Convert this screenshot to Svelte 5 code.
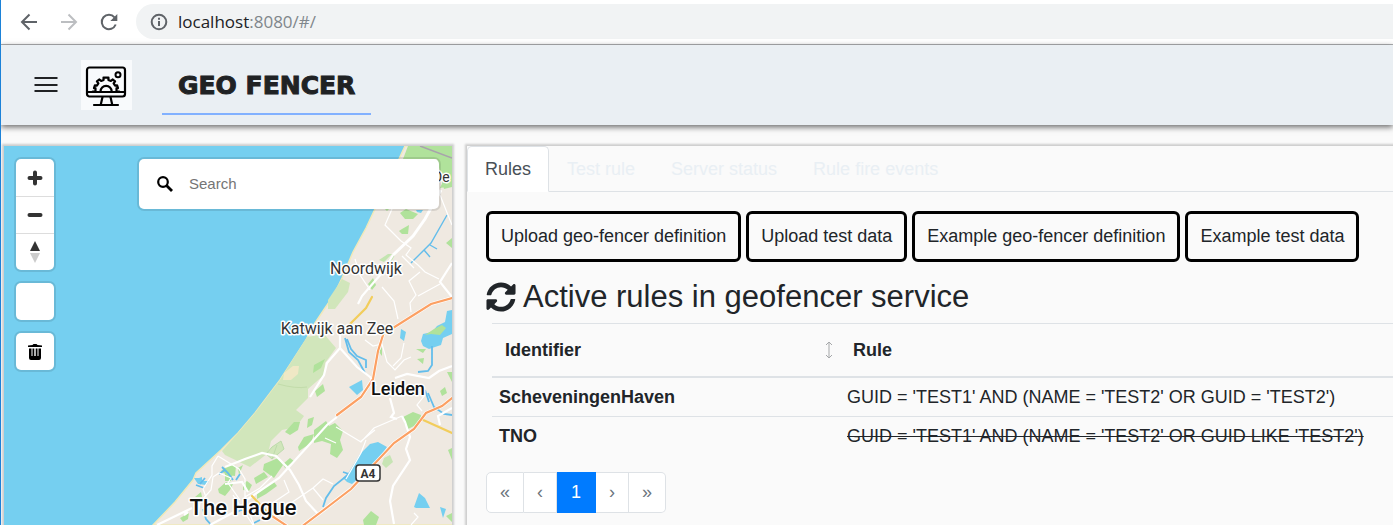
<script>
  const tabs = ['Rules', 'Test rule', 'Server status', 'Rule fire events'];
  const actions = [
    'Upload geo-fencer definition',
    'Upload test data',
    'Example geo-fencer definition',
    'Example test data'
  ];
  const rules = [
    { id: 'ScheveningenHaven', rule: "GUID = 'TEST1' AND (NAME = 'TEST2' OR GUID = 'TEST2')", active: true },
    { id: 'TNO', rule: "GUID = 'TEST1' AND (NAME = 'TEST2' OR GUID LIKE 'TEST2')", active: false }
  ];
  let current = $state(0);
  let search = $state('');
</script>

<div class="window">
  <div class="browser">
    <button class="nav" aria-label="Back">
      <svg width="18" height="18" viewBox="0 0 18 18" fill="none" stroke="#5f6368" stroke-width="2"><path d="M17 9H2M9.500 1.500L2 9l7.500 7.500" /></svg>
    </button>
    <button class="nav" aria-label="Forward">
      <svg width="18" height="18" viewBox="0 0 18 18" fill="none" stroke="#bcbec1" stroke-width="2"><path d="M1 9h15M8.500 1.500L16 9l-7.500 7.500" /></svg>
    </button>
    <button class="nav" aria-label="Reload">
      <svg width="18" height="18" viewBox="0 0 18 18" fill="none" stroke="#5f6368" stroke-width="2"><path d="M15.700 11.500A7.200 7.200 0 1 1 14.500 4.300" /><path d="M17.300 1v7h-7z" fill="#5f6368" stroke="none" /></svg>
    </button>
    <div class="address">
      <svg width="18" height="18" viewBox="0 0 18 18" fill="none" stroke="#5f6368" stroke-width="2"><circle cx="9" cy="9" r="7.300" /><path d="M9 8v5M9 4.800v2" /></svg>
      <span class="url" role="textbox" tabindex="0" aria-label="Address"><b>localhost</b>:8080/#/</span>
    </div>
  </div>

  <header>
    <button class="menu" aria-label="Menu">
      <svg width="24" height="18" viewBox="0 0 24 18" stroke="#202224" stroke-width="2"><path d="M0.500 2h23M0.500 9h23M0.500 15h23" /></svg>
    </button>
    <div class="logo">
      <svg width="51" height="50" viewBox="0 0 51 50" fill="none" stroke="#000" stroke-width="2.200" stroke-linejoin="round" stroke-linecap="round">
        <rect x="6" y="7.500" width="38" height="29" rx="2.500" />
        <path d="M6 32h38M21.500 37l-1.700 7.500M29.500 37l1.700 7.500M13 45h24" />
        <circle cx="37" cy="14.800" r="2.500" stroke-width="2" />
        <path d="M19.500 31.500a5.600 5.600 0 0 1 11.200 0" />
        <path d="M11.800 31.500h2.700v-3.300h-1.500l.9-2.900 2 .3 1.500-2.200-1.500-2 2.300-1.900 1.900 1.400 2.500-1-.1-2.200h5l-.1 2.200 2.500 1 1.900-1.400 2.300 1.900-1.500 2 1.500 2.200 2-.3.9 2.900h-1.500v3.300h2.700" stroke-width="2.200" />
      </svg>
    </div>
    <a class="brand" href="#/">GEO FENCER</a>
  </header>

  <main>
    <section class="map" aria-label="Map">
      <svg class="tiles" viewBox="4 146 448 379" preserveAspectRatio="xMinYMin slice">
        <rect x="4" y="146" width="2000" height="2000" fill="#75cff0" />
        <path d="M405 146L399 159 375 209 366 228 353 252 342 278 334 295 325 308 315 323 306 340 280 380 255 413 238 433 221 450 196 473 193 480 175 502 153 525H453V146z" fill="#efe9e1" stroke="#f1e9b9" stroke-width="1.500" />
        <!-- dunes and woods -->
        <path d="M307 337L324 334 336 348 325 363 324 375 308 389 308 398 296 410 304 416 296 427 282 430 271 441 268 453 250 467 225 455 222 451 238 433 255 413 280 380z" fill="#d1e6bb" />
        <path d="M342 279l8 4-2 9-13 17-7 0 0-9z" fill="#d1e6bb" />
        <path d="M293 366l6 0-1 8-7 6-8 0 1-7z" fill="#f0e8c5" />
        <path d="M278 384q18 5 29 3" fill="none" stroke="#c2dcaa" />
        <g fill="#b0e29b">
          <path d="M408 146h44v41l-8 2-7-30h-34z" />
          <path d="M400 213l6-4 12 5-5 5-8 0zM402 229l7-4-1 9-6 0-3-3zM368 284l5-6 3 7-4 5zM384 208l5 1-2 2zM446 243l6-5v10zM440 188l4-9 2 8z" />
          <path d="M379 260l9-6 4 0-8 8-5-2zM389 259l6-4-4 7-4 2z" opacity=".7" />
          <path d="M315 391l8-7 2 7-8 6zM314 365l11-6-4 9-8 5z" />
          <path d="M308 419l6-2-2 8-5 3zM285 432l9-10 6 0-2 8-8 5zM298 447l6-10 10-3-3 9-12 8zM314 430l12-9 3 5 6-3 8 8-3 9 3 10-6 8-7-4 1-10-9-3-8 2z" />
          <path d="M403 417l10-5 8 3-1 8-12 6-3-4zM440 391l5-4 2 6-5 3zM447 372h5v10zM416 349l10 0-3 4zM417 359l7-1-1 6zM379 352l3-5 0 9z" />
          <path d="M264 464l14-6 5 7-9 13-11-8zM283 464l7-6 4 3-9 7zM254 478l10-6 4 5-12 7zM257 493l17-11 3 4-11 8-9 5zM243 484l4-3 5 4-3 6-6-1zM218 489l8-7 8 0-4 8-5 6-6-3zM221 471l7-6 8 1-1 10-8-1zM238 468l5-3-4 10zM195 497l6-5 1 5zM180 518l9-5-1 6-5 3zM225 472l9-8-3 17-6 0z" />
          <path d="M363 520l8-9 8 6-3 8h-12zM446 516l6-3v9zM448 450l4-2v12z" />
          <path d="M384 458l6-3 3 7-7 6-4-4z" opacity=".65" />
        </g>
        <path d="M272 447l9-6 3 8-12 10-6-5zM277 445l-5 14" fill="#d1e6bb" stroke="#bddbab" stroke-width="1" />
        <!-- water -->
        <g fill="#75cff0">
          <path d="M416 210l7 0-2 3-4-1zM349 387l13-7 1 10-6 5zM401 329l5 3-2 9-4-3z" />
          <path d="M421 341l2-7 9-2 5-6 8-4 2-11 5-1v24l-9 4-2 7-12 4-6-3z" />
          <path d="M343 478l6-6 11-18 10-10 8-2 9 5-7 10-20 20-8 7-5-2zM414 507l5-14 6 5 5 10-14 0zM440 507l6 2-3 9zM194 478l5 0 3-1 0 4 7 0-3 4-8-1z" />
        </g>
        <path d="M425 335l9-6 8-4 4 3-6 7-9-1z" fill="#b0e29b" />
        <g fill="none" stroke="#63bdeb" stroke-width="1.800">
          <path d="M447 215l-16 28-20 20M424 250l6 7M430 245l7 4" stroke-width="1.400" />
          <path d="M432 346v19l-4 6-10 1M347 339l4 10 6 7 9 4 0 8M345 338l4 14 9 8 7 13" />
          <path d="M349 474l-15 12-8 12-3 9M343 472l6 2M428 393l6 14 10 7 8 1M425 390l4 12M222 467l6 6 5 7M236 480l4-6M196 485l8 3M200 484l5-6M203 509l3 10 7 8M233 514l8-4 9-1M260 520l-6 3M225 470l-6 4" />
        </g>
        <path d="M420 146l32 12" fill="none" stroke="#a8a3ac" stroke-width="1.500" />
        <!-- minor roads -->
        <g fill="none" stroke="#fff" stroke-width="1.200">
          <path d="M392 209l-7 16 16 16 10 7-5 7 12 10 7 7 14 7M402 256l12 12M420 272l-11 9 7 14-6 8 1 9M440 284l-22 12M355 259l5 16 10 15M382 287l12 14 4 18M440 195l12 30M365 340l8 6 9-2 5 18 8 8 9-10 7-3M404 343l-3 15-8 8M366 440l-5 13-15 26M402 416l-28 12-13 14-25-15M325 438l11 5M360 442l15-12M425 395l-8 10 5 6M245 497l15-9 12-12M291 503l22-15 10-9 10 5M313 488l10 12M240 500l-12-17 3-5-12-5-6 4-2 13-11 12-2 14M233 495l20 30M411 525l7-8-4-4M284 480l5 12-18 12M218 456l-6 10 0 9-9 14 3 8M218 456l21 13 6 10 0 22 9 24" />
        </g>
        <g fill="none" stroke="#fff" stroke-width="2.200">
          <path d="M393 255l-12 19-19 22-4 8M452 263l-12 19 12 15M340 330v18l17 19 13 10 6 9M340 348l-13 15-3 12-14 22M390 398l4 15-3 4 6 2M402 416l3 6 5 15-4 12 4 11-17 26-3 15 4 23M395 378l12-4 22 4 10-7 13-5M452 408l-14 8 2 9M225 467l20-8 17-6 14 3 14 14 9 15 7 16 13 14M157 525l35-17M210 525l26-14M245 501l34-23 48-53 10-8M225 484l17-2 6 10M184 515l4-3" />
        </g>
        <path d="M441 190L425 219 413 236 393 255" fill="none" stroke="#fff" stroke-width="3" />
        <g fill="none" stroke-linecap="round">
          <path d="M372 297l-6 11-18 18M252 496l16 17M421 419l31 14" stroke="#f2cd5b" stroke-width="2.200" />
          <path d="M452 298l-21 6-38 24-9 4-6 19-5 28-12 18-24 18M452 398l-10 8-16 7-12 16-20 14-43 46-26 20-20 15-16 13M269 514l18 12" stroke="#fff" stroke-width="3.500" />
          <path d="M452 298l-21 6-38 24-9 4-6 19-5 28-12 18-24 18M452 398l-10 8-16 7-12 16-20 14-43 46-26 20-20 15-16 13M269 514l18 12" stroke="#fca063" stroke-width="2.200" />
        </g>
        <rect x="356" y="465" width="24" height="16" rx="3" fill="#fff" stroke="#333" stroke-width="1.500" />
        <g class="places">
          <text class="shield" x="368" y="478" text-anchor="middle">A4</text>
          <text x="366" y="274" text-anchor="middle">Noordwijk</text>
          <text x="337" y="334" text-anchor="middle">Katwijk aan Zee</text>
          <text x="433" y="182" class="small">De</text>
          <text class="town" x="398" y="395" text-anchor="middle">Leiden</text>
          <text class="city" x="243" y="515" text-anchor="middle">The Hague</text>
        </g>
      </svg>
      <div class="overlay">
        <div class="controls">
          <div class="group">
            <button aria-label="Zoom in"><svg width="16" height="16" viewBox="0 0 16 16" stroke="#333" stroke-width="4" stroke-linecap="round"><path d="M2.500 8h11M8 2.500v11" /></svg></button>
            <button aria-label="Zoom out"><svg width="16" height="16" viewBox="0 0 16 16" stroke="#333" stroke-width="4" stroke-linecap="round"><path d="M2.500 8h11" /></svg></button>
            <button aria-label="Reset bearing"><svg width="10" height="24" viewBox="0 0 10 24"><path d="M0 11L5 1l5 10z" fill="#333" /><path d="M0 13l5 10 5-10z" fill="#ccc" /></svg></button>
          </div>
          <div class="group"><button aria-label="Draw area"></button></div>
          <div class="group">
            <button aria-label="Delete"><svg width="16" height="18" viewBox="0 0 16 18"><path d="M1 4V2.500L5.500 2 6.500 1h3l1 1 4.500.5V4zM2 5.500h2.500V13h1V5.500h1.800V13h1.400V5.500h1.800V13h1V5.500H14V15q0 2-2 2H4q-2 0-2-2z" /></svg></button>
          </div>
        </div>
        <label class="search">
          <svg width="16" height="16" viewBox="0 0 16 16" fill="none" stroke="#000" stroke-width="2.200"><circle cx="6" cy="6" r="4.800" /><path d="M9.500 9.500L15 15" stroke-width="2.800" /></svg>
          <input type="text" placeholder="Search" aria-label="Search" bind:value={search} />
        </label>
      </div>
    </section>

    <section class="panel">
      <div class="tabs" role="tablist">
        {#each tabs as tab, i}
          <button role="tab" aria-selected={current === i} class:active={current === i} onclick={() => (current = i)}>{tab}</button>
        {/each}
      </div>
      <div class="content">
        <div class="actions">
          {#each actions as action}<button>{action}</button>{/each}
        </div>
        <h3>
          <svg width="30" height="30" viewBox="0 0 512 512" fill="#212529"><path d="M370.720 133.280C339.458 104.008 298.888 87.962 255.848 88c-77.458.068-144.328 53.178-162.791 126.850-1.344 5.363-6.122 9.150-11.651 9.150H24.103c-7.498 0-13.194-6.807-11.807-14.176C33.933 94.924 134.813 8 256 8c66.448 0 126.791 26.136 171.315 68.685L463.030 40.970C478.149 25.851 504 36.559 504 57.941V192c0 13.255-10.745 24-24 24H345.941c-21.382 0-32.090-25.851-16.971-40.971l41.750-41.749zM32 296h134.059c21.382 0 32.090 25.851 16.971 40.971l-41.750 41.750c31.262 29.273 71.835 45.319 114.876 45.280 77.418-.070 144.315-53.144 162.787-126.849 1.344-5.363 6.122-9.150 11.651-9.150h57.304c7.498 0 13.194 6.807 11.807 14.176C478.067 417.076 377.187 504 256 504c-66.448 0-126.791-26.136-171.315-68.685L48.970 471.030C33.851 486.149 8 475.441 8 454.059V320c0-13.255 10.745-24 24-24z" /></svg>
          Active rules in geofencer service
        </h3>
        <table>
          <thead>
            <tr>
              <th class="id"><div>Identifier <svg width="8" height="18" viewBox="0 0 8 18" fill="none" stroke="#a5a7a9"><path d="M4 1v16M1 4l3-3 3 3M1 14l3 3 3-3" /></svg></div></th>
              <th>Rule</th>
            </tr>
          </thead>
          <tbody>
            {#each rules as r}
              <tr>
                <th scope="row">{r.id}</th>
                <td>{#if r.active}{r.rule}{:else}<s>{r.rule}</s>{/if}</td>
              </tr>
            {/each}
          </tbody>
        </table>
        <nav aria-label="Pages">
          <button aria-label="First page">«</button>
          <button aria-label="Previous page">‹</button>
          <button class="on">1</button>
          <button aria-label="Next page">›</button>
          <button aria-label="Last page">»</button>
        </nav>
      </div>
    </section>
  </main>
</div>

<style>
  :global(body) { margin: 0; background: #fafafa; }
  .window {
    box-sizing: border-box;
    min-height: 100vh;
    display: flex;
    flex-direction: column;
    border-left: 1px solid #1c82d8;
    overflow: hidden;
    color: #212529;
    font: 18px/26px "Liberation Sans", Arial, sans-serif;
  }
  button { font: inherit; color: inherit; margin: 0; padding: 0; border: 0; background: none; cursor: pointer; }
  svg { display: block; flex: none; }

  .browser {
    display: flex;
    align-items: center;
    gap: 22px;
    padding: 4px 0 5px 19px;
    background: #fff;
    border-bottom: 1px solid #b0b2b4;
  }
  .address {
    flex: 1;
    display: flex;
    align-items: center;
    gap: 10px;
    height: 35px;
    margin-left: -4px;
    padding-left: 14px;
    border-radius: 18px 0 0 18px;
    background: #f1f3f4;
  }
  .url { font: 17px/26px "Open Sans", "Noto Sans", sans-serif; color: #80868b; }
  .url b { font-weight: 400; color: #202124; }

  header {
    position: relative;
    display: flex;
    align-items: center;
    height: 80px;
    padding-left: 33px;
    background: #eaeff3;
    box-shadow: 0 2px 6px rgba(0, 0, 0, .6);
  }
  .logo { margin-left: 23px; background: #f8fafc; }
  .brand {
    align-self: flex-start;
    margin: 14px 0 0 30px;
    padding: 0 16px;
    border-bottom: 2px solid #82b1ff;
    color: #202224;
    font: 700 25px/54px "DejaVu Sans", sans-serif;
    -webkit-text-stroke: 1px #202224;
    text-decoration: none;
  }

  main {
    flex: 1;
    display: grid;
    grid-template-columns: 448fr 926fr;
    gap: 15px;
    padding: 21px 0 0 3px;
  }
  .map, .panel { box-shadow: 0 0 2px 2px rgba(0, 0, 0, .18); min-width: 0; }
  .map { position: relative; }
  .tiles { position: absolute; width: 100%; height: 100%; }
  .places {
    font: 16px Roboto, sans-serif;
    fill: #333;
    stroke: #fff;
    stroke-width: 3px;
    stroke-linejoin: round;
    paint-order: stroke;
  }
  .town { font-size: 18px; font-weight: 500; fill: #111; }
  .city { font-size: 22px; font-weight: 500; fill: #111; }
  .small { font-size: 14px; }
  .shield { font-size: 12px; font-weight: 700; }
  .overlay {
    position: relative;
    display: flex;
    justify-content: space-between;
    align-items: flex-start;
    padding: 13px 13px 0 12px;
  }
  .controls { display: grid; gap: 13px; }
  .group, .search { background: #fff; border-radius: 5px; box-shadow: 0 0 0 2px rgba(0, 0, 0, .1); }
  .group button { display: grid; place-items: center; width: 38px; height: 37px; }
  .group button + button { border-top: 1px solid #ddd; }
  .search { display: flex; align-items: center; gap: 16px; width: 282px; height: 50px; padding-left: 18px; }
  .search input {
    flex: 1;
    min-width: 0;
    padding: 0;
    border: 0;
    outline: 0;
    background: none;
    font: 15px/20px "Liberation Sans", Arial, sans-serif;
  }
  .search input::placeholder { color: #757575; opacity: 1; }

  .tabs { display: flex; border-bottom: 1px solid #dee2e6; }
  .tabs button {
    margin-bottom: -1px;
    padding: 9px 17px;
    border: 1px solid transparent;
    border-radius: 5px 5px 0 0;
    color: #e9eff4;
  }
  .tabs .active { color: #495057; background: #fff; border-color: #dee2e6 #dee2e6 #fff; }
  .content { padding: 19px 0 0 19px; }
  .actions { display: flex; gap: 5px; }
  .actions button { padding: 9px 12px; border: 3px solid #000; border-radius: 6px; line-height: 27px; white-space: nowrap; }
  h3 { display: flex; gap: 7px; align-items: center; margin: 16px 0 7px; font-size: 31px; font-weight: 400; line-height: 38px; }
  table { width: calc(100% - 6px); margin-left: 6px; border-collapse: collapse; text-align: left; }
  thead th { padding: 13px; border-top: 1px solid #dee2e6; border-bottom: 2px solid #dee2e6; }
  thead div { display: flex; justify-content: space-between; }
  thead svg { margin: 4px -6px 0 0; }
  .id { width: 322px; }
  tbody th, tbody td { padding: 6px 7px; border-top: 1px solid #dee2e6; }
  tbody tr:first-child > * { border-top: 0; }
  nav { display: flex; margin-top: 17px; }
  nav button {
    padding: 6px 13px;
    border: 1px solid #dee2e6;
    border-left: 0;
    background: #fff;
    color: #6c757d;
    line-height: 27px;
  }
  nav button:first-child { border-left: 1px solid #dee2e6; border-radius: 5px 0 0 5px; }
  nav button:last-child { border-radius: 0 5px 5px 0; }
  nav .on { padding: 6px 14px; background: #007bff; border-color: #007bff; color: #fff; }
</style>
